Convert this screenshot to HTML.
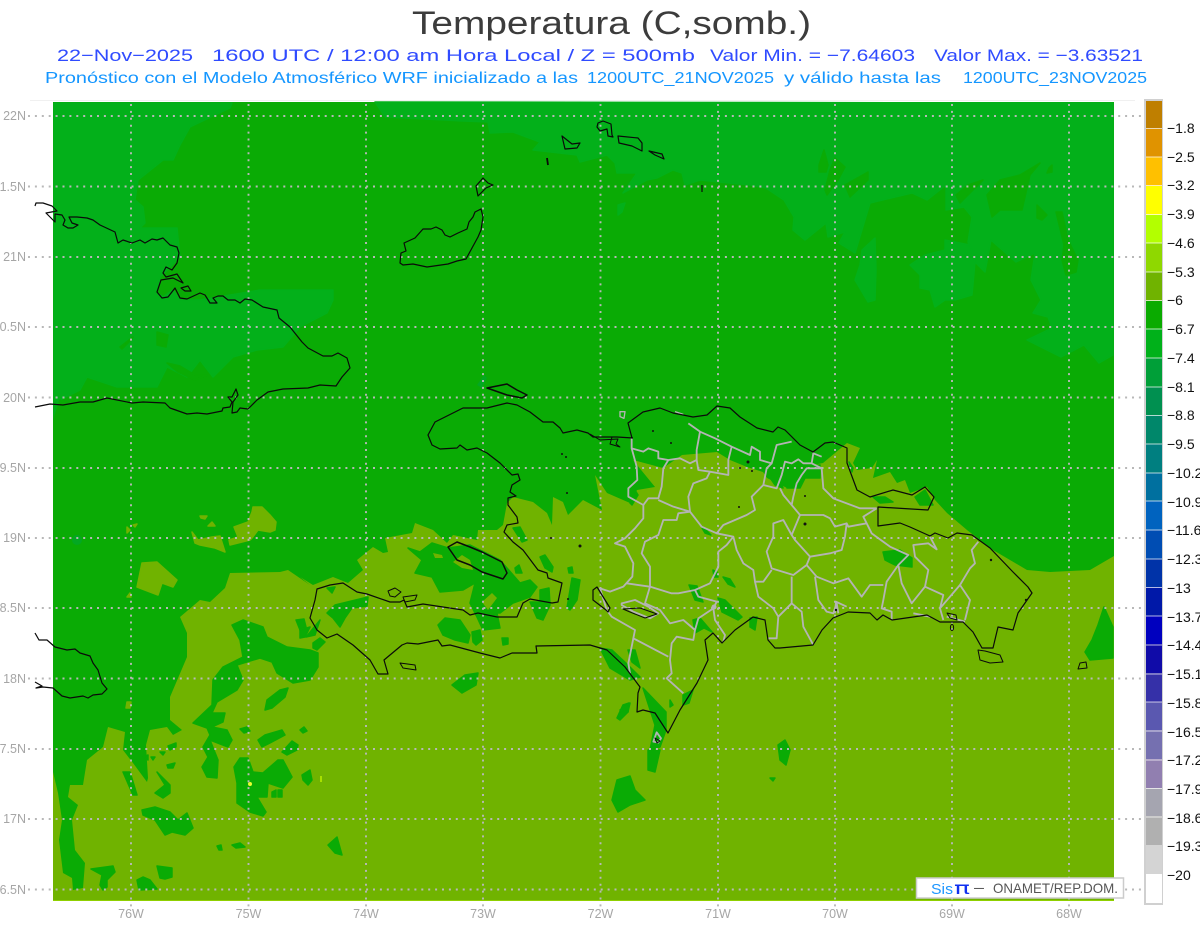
<!DOCTYPE html>
<html lang="es"><head><meta charset="utf-8"><title>Temperatura (C,somb.)</title>
<style>
html,body{margin:0;padding:0;background:#fff;width:1200px;height:927px;overflow:hidden}
svg{display:block}
text{font-family:"Liberation Sans",sans-serif;white-space:pre}
.c{fill:none;stroke:#0a0a0a;stroke-width:1.2;stroke-linejoin:round}
.l{fill:#a6a6a6;font-size:12.5px}
.b{fill:#111;font-size:14px}
.s path{stroke-linejoin:round;stroke-width:1.5}
</style></head><body>
<svg width="1200" height="927" viewBox="0 0 1200 927" xmlns="http://www.w3.org/2000/svg">
<rect width="1200" height="927" fill="#fff"/>
<text x="412" y="34" font-size="32" fill="#3c3c3c" textLength="399" lengthAdjust="spacingAndGlyphs">Temperatura (C,somb.)</text>
<g font-size="17" fill="#2f4bff">
<text x="57" y="61" textLength="136" lengthAdjust="spacingAndGlyphs">22−Nov−2025</text>
<text x="212" y="61" textLength="483" lengthAdjust="spacingAndGlyphs">1600 UTC / 12:00 am Hora Local / Z = 500mb</text>
<text x="710" y="61" textLength="205" lengthAdjust="spacingAndGlyphs">Valor Min. = −7.64603</text>
<text x="934" y="61" textLength="209" lengthAdjust="spacingAndGlyphs">Valor Max. = −3.63521</text>
</g>
<g font-size="16" fill="#1496ff">
<text x="45" y="83" textLength="533" lengthAdjust="spacingAndGlyphs">Pronóstico con el Modelo Atmosférico WRF inicializado a las</text>
<text x="587" y="83" textLength="187" lengthAdjust="spacingAndGlyphs">1200UTC_21NOV2025</text>
<text x="784" y="83" textLength="157" lengthAdjust="spacingAndGlyphs">y válido hasta las</text>
<text x="963" y="83" textLength="184" lengthAdjust="spacingAndGlyphs">1200UTC_23NOV2025</text>
</g>
<line x1="30" y1="100.5" x2="1135" y2="100.5" stroke="#f0f0f0"/>

<!-- field -->
<rect x="53" y="102" width="1061" height="799" fill="#0aab05"/>
<g fill="#03b01a" stroke="#03b01a" class="s">
<path d="M375 102L385 117L463 121L488 122L490 133L513 132L540 142L533 150L577 155L580 162L607 155L615 163L617 173L637 173L623 193L647 180L657 178L673 170L682 173L685 185L700 180L719 182L750 185L766 188L784 200L794 217L793 230L805 240L826 223L828 237L845 232L839 243L855 253L864 223L870 203L912 193L927 200L946 185L946 210L964 207L972 217L968 242L975 262L985 272L991 240L1016 262L1035 253L1031 280L1041 300L1033 313L1048 317L1052 328L1027 340L1061 357L1084 345L1099 363L1113 355L1113 103Z"/>
<path d="M875 238L876 270L875 300L868 302L855 280L860 265L862 250Z"/>
<path d="M945 240L970 245L975 262L972 295L955 300L945 300L935 307L930 290L920 288L920 275L910 265L925 255L945 250Z"/>
<path d="M54 103L232 103L230 108L190 127L180 145L173 160L163 160L138 180L135 200L143 207L145 223L140 228L177 228L180 257L160 277L157 293L163 297L173 290L180 300L200 300L260 290L333 290L333 300L327 313L300 327L283 347L257 350L233 357L213 377L200 360L187 377L167 367L157 387L117 387L87 377L80 390L60 400L54 420Z"/>
<path d="M618 205L625 203L622 212L618 215Z"/>
</g>
<g fill="#0aab05" stroke="#0aab05" class="s">
<path d="M819 165L824 150L828 165L826 172L819 172Z"/>
<path d="M835 158L845 167L838 180L827 195L825 190L830 170Z"/>
<path d="M868 172L868 180L850 197L845 185Z"/>
<path d="M983 180L960 203L956 195L968 185Z"/>
<path d="M1040 163L1030 175L1022 210L1000 210L992 217L987 195L1000 180L1020 175Z"/>
<path d="M1049 168L1052 165L1052 172L1047 173Z"/>
<path d="M1037 205L1047 215L1042 220L1037 218Z"/>
<path d="M1056 212L1062 212L1068 240L1078 260L1076 272L1066 275L1062 260L1064 245Z"/>
<path d="M157 332L168 335L166 347L157 345Z"/>
<path d="M120 347L133 337L131 340L122 349Z"/>
<path d="M167 363L180 366L195 375L207 375L195 380L178 372Z"/>
<path d="M54 420L60 400L62 404L56 428Z"/>
</g>
<!-- olive main -->
<path fill="#70b300" d="M53 901L53 772L58 793L62 820L59 840L63 873L72 878L73 890L83 888L85 863L75 850L72 820L78 805L68 797L70 785L83 785L87 760L103 747L108 727L125 732L123 750L133 763L147 782L148 778L146 745L150 730L167 727L173 735L182 730L170 720L170 697L187 657L187 633L180 617L200 600L210 602L225 588L230 573L280 572L288 570L310 585L300 577L313 585L333 577L348 583L363 570L357 560L373 547L383 553L388 552L385 538L412 533L415 523L433 530L447 543L453 535L477 540L478 530L497 530L503 525L507 503L513 497L533 502L547 513L552 525L553 497L563 502L568 515L583 500L602 510L595 475L607 493L630 503L637 490L655 487L633 460L663 468L682 455L717 452L730 460L747 467L763 472L767 478L787 488L797 475L813 465L823 463L847 443L860 448L853 463L857 470L872 468L877 460L873 478L890 472L897 483L905 480L910 493L927 487L935 500L947 513L967 530L993 550L1027 570L1050 572L1090 570L1114 556L1114 901Z"/>
<g fill="#70b300" stroke="#70b300" class="s">
<path d="M137 587L142 563L157 562L177 580L173 587L162 583L158 595Z"/>
<path d="M234 527L248 522L252 512L253 507L262 507L270 515L276 522L275 530L270 532L258 530L252 538L250 540L230 545L229 540L238 537Z"/>
<path d="M192 532L198 540L212 537L220 536L225 552L215 548L200 545L195 543Z"/>
<path d="M200 516L207 516L205 519L201 518Z"/><path d="M208 526L212 522L215 526Z"/>
<path d="M127 527L130 530L127 533Z"/><path d="M133 525L137 524L135 527Z"/><path d="M127 597L130 593L131 597Z"/>
<path d="M127 702L131 702L130 708L126 708Z"/>
</g>
<g fill="#0aab05" stroke="#0aab05" class="s">
<path d="M408 548L420 552L432 543L448 548L470 545L500 560L520 583L530 580L537 587L530 597L513 603L500 613L497 613L500 628L483 630L477 617L470 603L475 583L463 590L440 592L432 577L415 573L422 560Z"/>
<path d="M445 618L460 620L470 635L468 643L455 640L443 635L438 625Z"/>
<path d="M472 632L480 630L482 640L476 645L473 642Z"/>
<path d="M502 638L508 638L508 644L503 645Z"/>
<path d="M540 590L549 588L550 605L543 620L537 618L530 602L540 602Z"/>
<path d="M572 578L580 580L577 600L570 610L567 608L570 590Z"/>
<path d="M515 568L519 565L522 573L516 573Z"/>
<path d="M540 557L545 555L553 567L552 572L545 568Z"/>
<path d="M568 568L572 567L573 573L569 573Z"/>
<path d="M513 528L520 527L527 540L522 542Z"/>
<path d="M327 613L335 605L368 597L367 606L352 608L345 618L340 627L333 618Z"/>
<path d="M327 588L335 587L332 593Z"/>
<path d="M300 630L310 627L305 637L300 638Z"/>
<path d="M313 643L320 638L325 642L317 650L313 648Z"/>
<path d="M296 620L304 619L306 627L300 630Z"/>
<path d="M306 637L316 625L320 620L315 635Z"/>
<path d="M232 625L243 620L263 627L267 637L287 647L310 650L318 653L318 667L310 680L293 683L277 673L272 662L260 658L237 665L243 680L237 690L217 702L212 713L225 713L223 722L212 727L227 730L232 740L228 747L210 740L218 760L217 778L207 777L202 767L208 757L203 747L210 735L207 728L193 723L212 705L213 680L223 667L243 657L240 640Z"/>
<path d="M265 710L267 700L280 690L288 688L285 697L272 708Z"/>
<path d="M258 740L265 735L282 730L285 735L270 743L262 747Z"/>
<path d="M282 752L292 741L298 745L297 750L287 755Z"/>
<path d="M240 729L247 727L250 731L244 733Z"/><path d="M300 730L304 727L307 731L303 733Z"/>
<path d="M234 767L240 758L248 758L253 772L263 773L278 760L283 760L292 777L283 788L268 783L267 797L257 797L266 812L263 816L250 812L237 803L237 783Z"/>
<path d="M272 792L276 790L276 797L272 797Z"/><path d="M278 790L282 790L282 797L278 797Z"/>
<path d="M123 772L130 772L137 795L133 795Z"/>
<path d="M157 772L170 785L170 793L163 798L155 793L165 785Z"/>
<path d="M142 810L155 807L170 812L178 820L187 813L193 828L185 835L172 832L165 835L155 820L143 815Z"/>
<path d="M157 866L172 868L172 877L165 879L160 878Z"/>
<path d="M137 880L143 877L150 880L157 889L139 890Z"/>
<path d="M91 869L113 866L115 872L107 880L107 887L103 890L100 885L102 875Z"/>
<path d="M328 845L337 837L342 855L335 853Z"/>
<path d="M232 845L240 843L245 847L236 848Z"/><path d="M217 846L221 845L222 850L219 850Z"/>
<path d="M302 775L310 770L312 780L308 785L303 780Z"/>
<path d="M167 765L175 763L173 768L168 768Z"/><path d="M168 746L176 743L176 747L170 750Z"/>
<path d="M143 757L148 755L148 760Z"/><path d="M151 757L155 757L153 760Z"/><path d="M160 752L165 752L163 755Z"/>
<path d="M1085 652L1092 640L1098 625L1104 607L1113 627L1113 658L1090 660Z"/>
<path d="M883 552L900 550L912 558L912 567L895 565L885 560Z"/>
<path d="M873 497L885 497L893 502L880 503Z"/>
<path d="M915 497L925 490L933 505L920 505Z"/>
<path d="M768 475L778 474L783 488L775 485Z"/>
<path d="M785 470L800 467L820 465L820 478L805 478L800 488L787 488Z"/>
<path d="M702 528L706 530L711 535L705 533Z"/>
<path d="M713 570L717 572L718 577L714 577Z"/>
<path d="M723 577L730 579L735 587L728 584Z"/>
<path d="M689 585L697 586L703 602L695 600Z"/>
<path d="M718 598L725 600L742 617L738 620L722 612Z"/>
<path d="M750 618L757 617L755 630L750 627Z"/>
<path d="M693 620L700 618L712 632L704 628L695 633Z"/>
<path d="M630 503L635 490L638 495L632 505Z"/>
<path d="M600 648L612 650L628 665L640 677L630 680L610 668Z"/>
<path d="M628 650L635 650L640 668L632 662Z"/>
<path d="M643 688L666 712L666 730L660 747L650 750L655 725Z"/>
<path d="M683 695L693 690L689 703L683 705Z"/>
<path d="M670 700L673 705L670 707Z"/>
<path d="M617 718L623 705L629 703L628 712L620 720Z"/>
<path d="M648 750L660 750L655 772L648 770Z"/>
<path d="M612 800L617 780L630 776L635 790L645 800L630 805L618 812Z"/>
<path d="M778 745L785 740L790 750L786 765L780 760Z"/>
<path d="M770 778L775 778L773 781Z"/>
<path d="M452 685L465 675L478 673L476 685L462 693Z"/>
<path d="M620 710L630 703L628 712Z"/>
<path d="M849 462L853 468L852 472Z"/>
</g>
<g fill="#70b300">
<path d="M433 553L442 555L443 558L435 558Z"/>
<path d="M453 562L462 555L470 560L473 570L462 568Z"/>
<path d="M482 602L492 593L497 598L488 610Z"/>
</g>
<path d="M72 540a5 5 0 1 1 10 0a5 5 0 1 1 -10 0Z" fill="#03a822"/>
<path d="M477 385L484 375L487 378L482 388Z" fill="#03a822"/>
<circle cx="250" cy="784" r="2" fill="#e8ff30"/><rect x="320" y="776" width="2" height="6" fill="#a8e000"/>
<rect x="53" y="900" width="1061" height="1" fill="#8fd000"/>

<!-- grid -->
<g stroke="#b8b8b8" stroke-width="1.9" stroke-dasharray="2 4.9" fill="none">
<path d="M28 116H1142M28 186.500H1142M28 257H1142M28 327H1142M28 397.500H1142M28 468H1142M28 538H1142M28 608H1142M28 678.500H1142M28 749H1142M28 819H1142M28 889.500H1142"/>
<path d="M131 104V908M248.500 104V908M366 104V908M483 104V908M600.500 104V908M718 104V908M835 104V908M952 104V908M1069 104V908"/>
</g>
<g class="l" text-anchor="end">
<text x="26" y="120">22N</text><text x="26" y="191">1.5N</text><text x="26" y="261">21N</text><text x="26" y="331">0.5N</text><text x="26" y="402">20N</text><text x="26" y="472">9.5N</text><text x="26" y="542">19N</text><text x="26" y="612">8.5N</text><text x="26" y="683">18N</text><text x="26" y="753">7.5N</text><text x="26" y="823">17N</text><text x="26" y="894">6.5N</text>
</g>
<g class="l" text-anchor="middle">
<text x="131" y="918">76W</text><text x="248.500" y="918">75W</text><text x="366" y="918">74W</text><text x="483" y="918">73W</text><text x="600.500" y="918">72W</text><text x="718" y="918">71W</text><text x="835" y="918">70W</text><text x="952" y="918">69W</text><text x="1069" y="918">68W</text>
</g>

<!-- DR provinces -->
<g transform="translate(600 400) scale(.33333)" fill="none" stroke="#b4b4b4" stroke-width="5.5" stroke-linejoin="round">
<path d="M95 115L95 145L110 200L112 240L85 265L85 290L130 315L130 355L105 385L75 415L45 430L75 440L100 490L97 530L70 560L30 575L0 565L20 630L35 650L105 690L100 715L85 790L90 820"/>
<path d="M95 145L130 155L145 145L175 155L175 175L205 180L240 175L270 190L290 180L290 150L300 95L265 70M300 95L345 115L395 140L450 165L455 140L480 155L480 180L515 190L530 135L575 125"/>
<path d="M205 180L190 205L185 260L175 295L145 295L130 315M175 300L220 320L270 335L265 290L280 250L320 235L330 215L385 225L385 180L395 140M290 180L295 210L330 215"/>
<path d="M270 335L305 380L350 400L370 375L440 345L465 330L455 290L490 255L500 205L515 190M490 255L530 265L545 225L555 185L575 190L595 178L610 190L635 190L665 205L670 265L700 295L780 325L830 325M540 265L550 285L575 315L600 345M665 205L620 205L605 225L590 250L580 290L575 315M635 190L640 160L665 170"/>
<path d="M600 345L670 345L690 355L705 380L740 370L745 380L800 370L790 350L830 325M800 370L815 400L870 440L925 465L895 495L860 545L850 600L845 625L875 635L875 660M895 495L905 550L935 610L975 560L985 510L945 470L940 435L985 430L1010 448L990 410M975 560L1030 585L1020 625L1030 660M1020 625L1080 555L1110 600L1095 660M1080 555L1110 505L1125 490L1115 450L1135 425"/>
<path d="M850 555L810 555L785 590L745 535L700 550L650 530L620 495M645 530L655 600L680 635L700 640L710 610L715 640M620 495L630 470L585 420L575 405L600 345M630 470L690 460L725 450L735 410L740 370M575 405L550 360L520 370L520 410L500 455L515 505L580 525L620 495"/>
<path d="M515 510L490 545L465 545L460 510L430 490L410 450L400 410L350 400M400 410L380 435L355 455L355 500L330 550L285 570L235 580L215 580L150 560L80 550M150 560L150 500L125 460L135 425L175 405L190 360L230 360L235 340L270 335"/>
<path d="M150 560L135 610L180 630L210 670L250 660L285 690L280 720L230 710L215 730L210 780L215 820L200 835L250 880M100 715L205 770M285 690L295 655L340 625L350 605L295 590L285 570M340 625L345 660L375 705L370 725M465 545L475 590L520 625L535 650L530 715L505 715M575 530L575 610L535 650M575 610L605 635L610 680L640 735"/>
<path d="M65 610L105 600L145 620L175 640L150 655L100 635L65 615Z"/>
<path d="M160 1025L170 997L183 1015L175 1028Z"/>
<path d="M60 35L75 35L72 55L60 50Z" stroke-width="4"/>
<path d="M225 35L250 43" stroke-width="4"/>
<path d="M705 640L708 605L740 620"/>
<path d="M940 640L990 650M1040 650L1095 665"/>
</g>
<circle cx="714" cy="607" r="2.5" fill="#b4b4b4"/>

<!-- coastlines -->
<g class="c">
<path d="M35 206L36 203L43 203L52 206L57 211L46 213L55 222L55 214L62 215L65 220L63 225L68 228L73 228L78 225L72 223L69 217L77 217L87 218L93 220L100 225L115 232L118 243L123 240L132 243L140 240L145 243L152 239L157 240L163 238L170 245L177 247L179 253L177 263L172 270L166 267L163 273L166 277L177 274L183 283L173 278L161 280L157 292L162 298L168 297L175 288L180 298L187 299L200 293L205 295L210 303L217 303L213 298L218 296L223 296L228 300L235 300L240 303L245 299L252 300L263 307L277 310L279 318L290 327L302 342L308 348L323 356L332 356L338 353L347 358L350 368L342 377L336 386L320 385L308 388L283 389L268 392L257 400L248 409L240 408L237 412L232 413L233 402L238 395L236 389L232 397L228 397L232 402L230 407L223 408L222 411L207 414L197 413L187 414L170 408L165 403L143 402L132 403L107 398L93 402L80 402L63 405L50 404L35 407"/>
<path d="M181 288L188 286L191 291L185 291Z"/>
<path d="M35 633L39 640L47 640L55 647L67 650L75 649L80 653L90 656L93 663L98 670L102 683L107 689L102 694L93 695L88 698L83 696L70 698L62 696L53 688L43 687L36 688L42 686L35 682"/>
<path d="M400 263L401 253L406 251L404 243L415 238L423 229L431 229L436 227L442 230L445 235L450 237L458 233L467 229L469 222L473 217L475 212L481 209L483 217L481 230L478 237L466 259L457 261L448 264L427 267L413 264L403 265Z"/>
<path d="M476 186L483 178L488 183L493 185L486 188L478 196Z"/>
<path d="M562 136L572 144L580 143L577 148L565 149Z"/>
<path d="M547 158L548 165" stroke-width="1.8"/>
<path d="M598 123L603 121L611 124L612 135L613 137L608 136L607 129L600 131L597 127Z"/>
<path d="M618 136L638 138L642 143L642 151L632 146L619 143Z"/>
<path d="M649 151L662 154L664 159L655 155Z"/>
<path d="M702 185L702 192"/>
<path d="M487 388L507 384L517 390L527 395L522 398L507 395Z" stroke-width="1.5"/>
<path d="M448 547L457 542L470 547L482 552L502 562L507 573L503 579L482 572L470 565L457 560Z" stroke-width="1.5"/>
<path d="M400 663L415 665L416 670L403 668Z" stroke-width="1"/>
<path d="M388 591L395 588L401 592L395 597L390 596Z" stroke-width="1"/>
<path d="M403 597L417 595L415 600L405 602Z" stroke-width="1"/>
<path d="M593 590L597 587L610 608L608 612L606 610L593 600Z"/>
<path d="M623 609L640 608L657 614L645 618L630 612Z" stroke-width="1"/>
<path d="M633 438L617 437L600 437L593 437L588 433L577 430L563 433L560 428L553 422L543 422L530 412L517 405L507 403L487 408L463 408L443 418L435 422L428 435L432 445L440 449L457 448L460 445L467 450L477 448L487 453L500 463L512 475L518 474L520 480L512 485L510 492L516 496L508 498L508 505L517 517L518 523L507 525L504 532L513 542L523 550L538 570L547 573L548 578L562 583L558 602L552 603L530 599L523 603L517 617L497 617L478 613L470 615L463 610L423 604L407 607L404 600L400 602L390 602L367 594L357 592L343 583L330 585L317 589L315 600L310 618L317 630L327 638L337 634L353 645L370 660L378 674L388 674L384 660L402 645L407 643L418 644L438 640L442 646L450 645L480 653L500 658L512 653L537 653L536 646L590 645L607 650L625 667L640 687L638 693L637 712L643 710L655 713L668 733L680 710L697 683L708 660L705 640L713 633L722 643L735 630L753 617L765 620L768 640L775 648L780 648L813 645L822 630L833 618L848 612L870 613L877 620L883 615L892 620L927 615L940 622L963 622L973 632L982 648L993 648L998 627L1013 630L1018 613L1032 593L1028 587L1013 572L990 548L972 535L957 533L948 538L935 533L930 536L910 527L900 523L878 526L878 507L928 510L934 497L925 487L912 495L893 490L870 497L857 490L847 463L847 448L833 442L825 443L813 452L800 445L785 430L778 427L773 432L757 428L740 417L730 408L717 406L707 415L693 417L673 413L660 408L643 412L628 423L632 438L633 438"/>
<path d="M590 434L600 440L618 439L616 444L620 447L610 444L612 437" stroke-width="1"/>
<path d="M978 650L985 651L1000 655L1003 662L990 663L980 660Z" stroke-width="1"/>
<path d="M947 613L956 615L957 620L950 618Z" stroke-width="1"/>
<ellipse cx="952" cy="627.5" rx="1.6" ry="3" stroke-width="1"/>
<path d="M655 738L660 741L657 743Z" stroke-width="1"/>
<path d="M1080 663L1086 662L1087 668L1078 669Z" stroke-width="1"/>
</g>
<g fill="#111"><circle cx="653" cy="431" r="1"/><circle cx="671" cy="443" r="1"/><circle cx="748" cy="462" r="1.5"/><circle cx="740" cy="468" r="1"/><circle cx="752" cy="471" r="1"/><circle cx="805" cy="496" r="1"/><circle cx="739" cy="507" r="1"/><circle cx="805" cy="524" r="1.5"/><circle cx="991" cy="560" r="1.2"/><circle cx="1026" cy="600" r="1.2"/><circle cx="836" cy="610" r="1.2"/><circle cx="567" cy="493" r="1"/><circle cx="551" cy="538" r="1"/><circle cx="580" cy="546" r="1.5"/><circle cx="562" cy="454" r="1"/><circle cx="566" cy="457" r="1"/><circle cx="568" cy="599" r="1"/></g>

<!-- logo box -->
<rect x="916.500" y="878" width="207" height="20" fill="#fff" stroke="#ccc" stroke-width="1.5"/>
<text x="931" y="894" font-size="15" fill="#1e96ff" textLength="22" lengthAdjust="spacingAndGlyphs">Sis</text>
<text x="954" y="894" font-size="17" fill="#1030f0" textLength="16" lengthAdjust="spacingAndGlyphs" style="font-family:'DejaVu Sans',sans-serif">π</text>
<text x="973" y="893" font-size="14" fill="#555" textLength="12" lengthAdjust="spacingAndGlyphs">−</text>
<text x="993" y="893" font-size="14" fill="#555" textLength="125" lengthAdjust="spacingAndGlyphs">ONAMET/REP.DOM.</text>

<!-- colorbar -->
<rect x="1145" y="100" width="17" height="804" fill="#fff" stroke="#d0d0d0" stroke-width="2"/>
<g>
<rect x="1146" y="101" width="16" height="28" fill="#bf7f00"/>
<rect x="1146" y="129" width="16" height="28" fill="#e09300"/>
<rect x="1146" y="157" width="16" height="29" fill="#ffc000"/>
<rect x="1146" y="186" width="16" height="29" fill="#ffff00"/>
<rect x="1146" y="215" width="16" height="28" fill="#b3ff00"/>
<rect x="1146" y="243" width="16" height="29" fill="#8fd800"/>
<rect x="1146" y="272" width="16" height="29" fill="#70b300"/>
<rect x="1146" y="301" width="16" height="28" fill="#0aab00"/>
<rect x="1146" y="329" width="16" height="29" fill="#00b11a"/>
<rect x="1146" y="358" width="16" height="29" fill="#009f38"/>
<rect x="1146" y="387" width="16" height="28" fill="#009050"/>
<rect x="1146" y="415" width="16" height="29" fill="#00876a"/>
<rect x="1146" y="444" width="16" height="29" fill="#007f80"/>
<rect x="1146" y="473" width="16" height="28" fill="#00709f"/>
<rect x="1146" y="501" width="16" height="29" fill="#0063bf"/>
<rect x="1146" y="530" width="16" height="29" fill="#004db3"/>
<rect x="1146" y="559" width="16" height="28" fill="#0033a8"/>
<rect x="1146" y="587" width="16" height="29" fill="#0018a8"/>
<rect x="1146" y="616" width="16" height="28" fill="#0000bf"/>
<rect x="1146" y="644" width="16" height="29" fill="#100ba8"/>
<rect x="1146" y="673" width="16" height="29" fill="#3530a8"/>
<rect x="1146" y="702" width="16" height="28" fill="#5a58b0"/>
<rect x="1146" y="730" width="16" height="29" fill="#7570b0"/>
<rect x="1146" y="759" width="16" height="29" fill="#917fb0"/>
<rect x="1146" y="788" width="16" height="28" fill="#a5a5b0"/>
<rect x="1146" y="816" width="16" height="29" fill="#b0b0b0"/>
<rect x="1146" y="845" width="16" height="29" fill="#d4d4d4"/>
<rect x="1146" y="874" width="16" height="29" fill="#fff"/>
</g>
<path d="M1146 128.500H1162M1146 157H1162M1146 185.500H1162M1146 214.500H1162M1146 243H1162M1146 272H1162M1146 300.500H1162M1146 329H1162M1146 358H1162M1146 387H1162M1146 415.500H1162M1146 444H1162M1146 473H1162M1146 501H1162M1146 530H1162M1146 559H1162M1146 587.500H1162M1146 616H1162M1146 645H1162M1146 674H1162M1146 702H1162M1146 731H1162M1146 760H1162M1146 788.500H1162M1146 817H1162" stroke="#fff" stroke-opacity=".7" fill="none"/>
<g class="b">
<text x="1167" y="133">−1.8</text><text x="1167" y="162">−2.5</text><text x="1167" y="190">−3.2</text><text x="1167" y="219">−3.9</text><text x="1167" y="248">−4.6</text><text x="1167" y="277">−5.3</text><text x="1167" y="305">−6</text><text x="1167" y="334">−6.7</text><text x="1167" y="363">−7.4</text><text x="1167" y="392">−8.1</text><text x="1167" y="420">−8.8</text><text x="1167" y="449">−9.5</text><text x="1167" y="478">−10.2</text><text x="1167" y="507">−10.9</text><text x="1167" y="535">−11.6</text><text x="1167" y="564">−12.3</text><text x="1167" y="593">−13</text><text x="1167" y="622">−13.7</text><text x="1167" y="650">−14.4</text><text x="1167" y="679">−15.1</text><text x="1167" y="708">−15.8</text><text x="1167" y="737">−16.5</text><text x="1167" y="765">−17.2</text><text x="1167" y="794">−17.9</text><text x="1167" y="823">−18.6</text><text x="1167" y="851">−19.3</text><text x="1167" y="880">−20</text>
</g>
</svg>
</body></html>
